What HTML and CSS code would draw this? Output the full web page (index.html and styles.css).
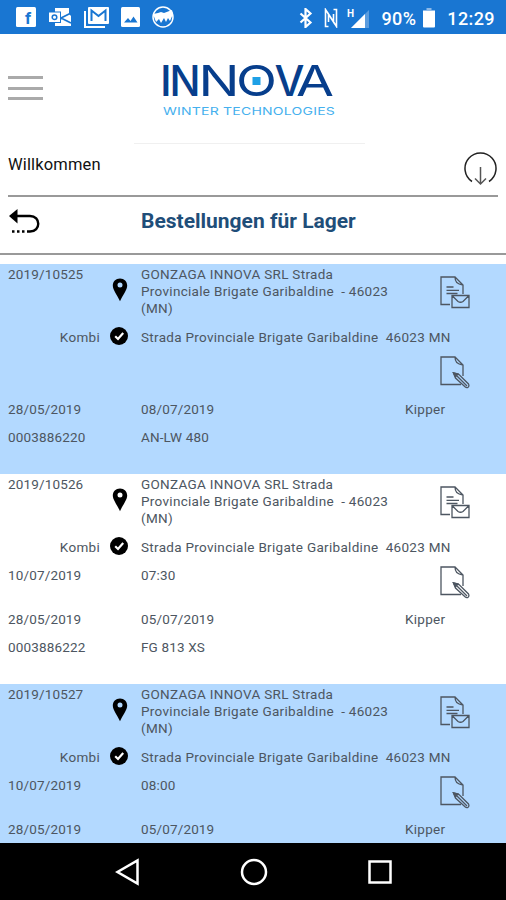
FILE: index.html
```html
<!DOCTYPE html>
<html lang="de">
<head>
    <meta charset="UTF-8">
    <meta name="viewport" content="width=device-width, initial-scale=1.0">
    <title>Bestellungen für Lager</title>
    <link rel="stylesheet" href="styles.css">
</head>
<body>

    <!-- Shared icons -->
    <svg class="sprite" width="0" height="0">
        <symbol id="pin" viewBox="0 0 16 24">
            <path fill-rule="evenodd" d="M8 .5C3.800.5.8 3.600.8 7.600.8 12 5.200 17 8 23.300 10.800 17 15.200 12 15.200 7.600 15.200 3.600 12.200.5 8 .5zM8 4.600a2.500 2.500 0 1 1 0 5 2.500 2.500 0 0 1 0-5z"/>
        </symbol>
        <symbol id="check" viewBox="0 0 18 18">
            <circle cx="9" cy="9" r="9"/>
            <path d="M5.200 9.300l2.800 2.700 5.200-6" fill="none" stroke="#fff" stroke-width="2.200"/>
        </symbol>
        <symbol id="doc-mail" viewBox="0 0 30 33">
            <g fill="none" stroke="currentColor" stroke-width="1.300">
                <path d="M10 28.500H1V1h14l8 8v9M15 1c0 5 2 7 8 8"/>
                <path d="M6.500 11h7M6.500 14.300h12.500M6.500 17.500h11"/>
                <path d="M12 19.500h17v12H12zM12 19.500l6 6q2.500 1.500 5 0l6-6"/>
            </g>
        </symbol>
        <symbol id="doc-pen" viewBox="0 0 30 33">
            <g fill="none" stroke="currentColor" stroke-width="1.300">
                <path d="M21 28.500H1V1h14l8 8v11M15 1c0 5 2 7 8 8"/>
                <path d="M13.500 17l5.500 1.500 9.500 9.500q1 2-.5 3.300-1.500.7-3-.5L15.500 22zM17 20l10 10"/>
                <path d="M13.500 17l4.500 1-2.500 3z" fill="currentColor"/>
            </g>
        </symbol>
    </svg>

    <div class="statusbar">
        <div class="notifications">
            <svg width="20" height="20" viewBox="0 0 20 20">
                <rect width="20" height="20" rx="1.500" fill="#fff"/>
                <text class="fb" x="9" y="17">f</text>
            </svg>
            <svg width="24" height="20" viewBox="0 0 24 20">
                <path d="M7 1h14v6l2 2v10H7z" fill="#fff"/>
                <path d="M13 11l10-5M13 11l10 5M13 11l-2 4" fill="none" stroke="#1976d2" stroke-width="1.800"/>
                <rect x=".5" y="5" width="12" height="10.500" fill="#fff" stroke="#1976d2"/>
                <circle cx="6.500" cy="10.200" r="2.300" fill="none" stroke="#1976d2" stroke-width="1.500"/>
            </svg>
            <svg width="25" height="21" viewBox="0 0 25 21">
                <path d="M1 4v16h20" fill="none" stroke="#fff" stroke-width="2"/>
                <rect x="4" width="21" height="17" rx="1" fill="#fff"/>
                <path d="M7.500 14V3.500l7 5.500 7-5.500V14" fill="none" stroke="#1976d2" stroke-width="2"/>
            </svg>
            <svg width="19" height="20" viewBox="0 0 19 20">
                <rect width="19" height="20" rx="1.500" fill="#fff"/>
                <path d="M3 15.500l4-4.500 2.500 3 3-4.500 4 6z" fill="#1976d2"/>
            </svg>
            <svg width="22" height="22" viewBox="0 0 22 22">
                <circle cx="11" cy="11" r="10" fill="none" stroke="#fff" stroke-width="1.500"/>
                <path d="M1 8l5-1 3-1 3 1 8-3 1 4-3 7-2-3-2 4-2-4-3 5-2-4-3 3z" fill="#fff"/>
            </svg>
        </div>
        <div class="system">
            <svg width="14" height="20" viewBox="0 0 14 20">
                <path d="M1.500 5.500l10 9L6.500 19V1l5 4.500-10 9" fill="none" stroke="#fff" stroke-width="2.200"/>
            </svg>
            <svg class="nfc" width="14" height="20" viewBox="0 0 14 20">
                <path d="M4.500 18.500H1.500V1.500L9.500 14V6M9.500 1.500h3v17L4.500 6v8" fill="none" stroke="#fff" stroke-width="1.600"/>
            </svg>
            <svg class="signal" width="24" height="22" viewBox="0 0 24 22">
                <text class="net" x="0" y="10">H</text>
                <path d="M22 3v18H4z" fill="#5b9cde"/>
                <path d="M18 7v14H4z" fill="#fff"/>
            </svg>
            <span>90%</span>
            <svg class="battery" width="12" height="20" viewBox="0 0 12 20">
                <path d="M3.500 0h5v2H12v2H0V2h3.500z" fill="#8db9e8"/>
                <path d="M0 3h12v15.500q0 1-1 1H1q-1 0-1-1z" fill="#fff"/>
            </svg>
            <span>12:29</span>
        </div>
    </div>

    <header class="header">
        <div class="burger"><span></span><span></span><span></span></div>
        <svg class="logo" width="174" height="54" viewBox="0 0 174 54">
            <g class="logo-name">
                <text x="-2" y="33">I</text>
                <text x="7.500" y="33" textLength="31" lengthAdjust="spacingAndGlyphs">N</text>
                <text class="wide" x="36.500" y="33" textLength="41" lengthAdjust="spacingAndGlyphs">N</text>
                <text class="wide" x="74" y="33" textLength="41" lengthAdjust="spacingAndGlyphs">O</text>
                <text x="112.500" y="33" textLength="30" lengthAdjust="spacingAndGlyphs">V</text>
                <text class="wide" x="134" y="33" textLength="38" lengthAdjust="spacingAndGlyphs">A</text>
            </g>
            <rect x="90.500" y="14" width="8" height="8" fill="#1ea0e6"/>
            <text class="logo-sub" x="1" y="51.500" textLength="172" lengthAdjust="spacingAndGlyphs">WINTER TECHNOLOGIES</text>
        </svg>
    </header>

    <div class="welcome">
        <span>Willkommen</span>
        <svg width="34" height="34" viewBox="0 0 34 34">
            <path d="M8 29.500A15.500 15.500 0 1 1 25 29.500" fill="none" stroke="#222" stroke-width="1.500"/>
            <path d="M16.500 15v17M11 26.500l5.500 5.500 5.500-5.500" fill="none" stroke="#555" stroke-width="1.500"/>
        </svg>
    </div>

    <div class="titlebar">
        <svg width="33" height="26" viewBox="0 0 33 26">
            <path d="M8 8h14c11 0 11 15.500 0 15.500h-2" fill="none" stroke="#000" stroke-width="2.400"/>
            <path d="M1 8l8.500-7v14.500z"/>
            <path d="M4 23.500h16" stroke="#000" stroke-width="2.400" stroke-dasharray="2.500 2.500"/>
        </svg>
        <h1>Bestellungen für Lager</h1>
    </div>

    <main class="orders">
        <section class="order">
            <div class="number">2019/10525</div>
            <svg class="pin"><use href="#pin"/></svg>
            <div class="customer">GONZAGA INNOVA SRL Strada Provinciale Brigate Garibaldine&nbsp; - 46023 (MN)</div>
            <svg class="doc mail"><use href="#doc-mail"/></svg>
            <div class="type">Kombi</div>
            <svg class="check"><use href="#check"/></svg>
            <div class="address">Strada Provinciale Brigate Garibaldine&nbsp; 46023 MN</div>
            <div class="date"></div>
            <div class="value"></div>
            <svg class="doc pen"><use href="#doc-pen"/></svg>
            <div class="date">28/05/2019</div>
            <div class="value">08/07/2019</div>
            <div class="vehicle">Kipper</div>
            <div class="date">0003886220</div>
            <div class="value">AN-LW 480</div>
        </section>

        <section class="order">
            <div class="number">2019/10526</div>
            <svg class="pin"><use href="#pin"/></svg>
            <div class="customer">GONZAGA INNOVA SRL Strada Provinciale Brigate Garibaldine&nbsp; - 46023 (MN)</div>
            <svg class="doc mail"><use href="#doc-mail"/></svg>
            <div class="type">Kombi</div>
            <svg class="check"><use href="#check"/></svg>
            <div class="address">Strada Provinciale Brigate Garibaldine&nbsp; 46023 MN</div>
            <div class="date">10/07/2019</div>
            <div class="value">07:30</div>
            <svg class="doc pen"><use href="#doc-pen"/></svg>
            <div class="date">28/05/2019</div>
            <div class="value">05/07/2019</div>
            <div class="vehicle">Kipper</div>
            <div class="date">0003886222</div>
            <div class="value">FG 813 XS</div>
        </section>

        <section class="order">
            <div class="number">2019/10527</div>
            <svg class="pin"><use href="#pin"/></svg>
            <div class="customer">GONZAGA INNOVA SRL Strada Provinciale Brigate Garibaldine&nbsp; - 46023 (MN)</div>
            <svg class="doc mail"><use href="#doc-mail"/></svg>
            <div class="type">Kombi</div>
            <svg class="check"><use href="#check"/></svg>
            <div class="address">Strada Provinciale Brigate Garibaldine&nbsp; 46023 MN</div>
            <div class="date">10/07/2019</div>
            <div class="value">08:00</div>
            <svg class="doc pen"><use href="#doc-pen"/></svg>
            <div class="date">28/05/2019</div>
            <div class="value">05/07/2019</div>
            <div class="vehicle">Kipper</div>
        </section>
    </main>

    <nav class="navbar">
        <svg width="26" height="28" viewBox="0 0 26 28">
            <path d="M22.500 2.500v23L2.500 14z"/>
        </svg>
        <svg width="28" height="28" viewBox="0 0 28 28">
            <circle cx="14" cy="14" r="12"/>
        </svg>
        <svg width="26" height="26" viewBox="0 0 26 26">
            <rect x="2.500" y="2.500" width="21" height="21"/>
        </svg>
    </nav>

</body>
</html>
```

FILE: styles.css
```css
/* General body styles */
body {
    font-family: Roboto, Arial, sans-serif;
    background-color: #fff;
    color: #4d5661;
    margin: 0;
    height: 900px;
    display: flex;
    flex-direction: column;
    overflow: hidden;
    font-size: 13.5px;
    letter-spacing: 0.15px;
}
svg {
    display: block;
    flex: none;
}
.sprite {
    position: absolute;
}
/* Phone status bar */
.statusbar {
    height: 34px;
    flex: none;
    background-color: #1976d2;
    color: #fff;
    display: flex;
    justify-content: space-between;
    padding: 0 11px 0 16px;
    box-sizing: border-box;
    font-size: 18px;
    font-weight: 500;
    letter-spacing: 0.4px;
}
.notifications, .system {
    display: flex;
    align-items: center;
}
.notifications {
    gap: 12px;
}
.system {
    padding-top: 2px;
}
.nfc {
    margin-left: 11px;
}
.signal {
    margin: 0 10px 0 9px;
}
.battery {
    margin: 0 12px 0 7px;
}
.fb {
    font: bold 17px Roboto, sans-serif;
    letter-spacing: 0;
    fill: #1976d2;
}
.net {
    font: bold 10px Roboto, sans-serif;
    fill: #fff;
}
/* Header with menu and logo */
.header {
    height: 108px;
    flex: none;
    display: flex;
    padding-left: 8px;
}
.burger {
    width: 35px;
    padding-top: 42px;
    display: flex;
    flex-direction: column;
    gap: 7.5px;
}
.burger span {
    height: 3px;
    background-color: #aaa;
}
.logo {
    margin: 29px 0 0 119px;
    overflow: visible;
}
.logo-name {
    font: 500 43px Inter, sans-serif;
    letter-spacing: 0;
    fill: #073e8c;
}
.logo-name .wide {
    font-weight: 400;
}
.logo-sub {
    font: 400 10.5px Inter, sans-serif;
    fill: #45b0ee;
}
/* Welcome row */
.welcome {
    height: 55px;
    flex: none;
    margin: 0 8px;
    display: flex;
    justify-content: space-between;
    border-bottom: 2px solid #999;
    box-sizing: border-box;
    color: #111;
    font-size: 16.5px;
}
/* Faint rule under the logo */
.welcome::before {
    content: "";
    order: 1;
    width: 231px;
    height: 1px;
    margin-top: 1px;
    background-color: #f0f0f0;
}
.welcome span {
    width: 126px;
    line-height: 45px;
}
.welcome svg {
    order: 2;
    margin: 10px 0 0 99px;
}
/* Page title */
.titlebar {
    height: 58px;
    flex: none;
    box-sizing: border-box;
    border-bottom: 2px solid #999;
    padding-left: 8px;
    display: flex;
}
.titlebar svg {
    margin-top: 11px;
}
h1 {
    margin: 0 0 0 100px;
    font-size: 21px;
    line-height: 48px;
    font-weight: 700;
    letter-spacing: 0;
    color: #1f4e79;
}
/* Order list */
.orders {
    flex: 1;
    min-height: 0;
    overflow: hidden;
    padding-top: 9px;
}
.order {
    height: 210px;
    box-sizing: border-box;
    padding: 2px 8px 0;
    display: grid;
    grid-template-columns: 92px 41px 264px 35px 1fr;
    grid-template-rows: 57px 28px 44px 28px 28px;
    line-height: 28px;
    white-space: nowrap;
}
.order:nth-child(odd) {
    background-color: #b3d9ff;
}
.number, .customer {
    line-height: 17px;
}
.number {
    grid-column: 1;
}
.customer {
    grid-column: 3;
    white-space: normal;
    padding-right: 14px;
}
.customer, .address, .type, .vehicle {
    letter-spacing: 0.3px;
}
.pin {
    width: 16px;
    height: 24px;
    margin: 12px 0 0 12px;
}
.check {
    width: 18px;
    height: 18px;
    margin: 4px 0 0 10px;
}
.type {
    grid-column: 1;
    text-align: right;
}
.address {
    grid-column: 3 / 6;
}
.date {
    grid-column: 1;
}
.value {
    grid-column: 3;
}
.vehicle {
    grid-column: 4 / 6;
}
.doc {
    grid-column: 5;
    width: 30px;
    height: 33px;
}
.mail {
    margin-top: 10px;
}
.pen {
    margin-top: 5px;
}
/* Phone navigation bar */
.navbar {
    height: 57px;
    flex: none;
    background-color: #000;
    display: flex;
    align-items: center;
    justify-content: space-between;
    padding: 0 113px 0 115px;
}
.navbar svg {
    fill: none;
    stroke: #fff;
    stroke-width: 2.5;
}
```
